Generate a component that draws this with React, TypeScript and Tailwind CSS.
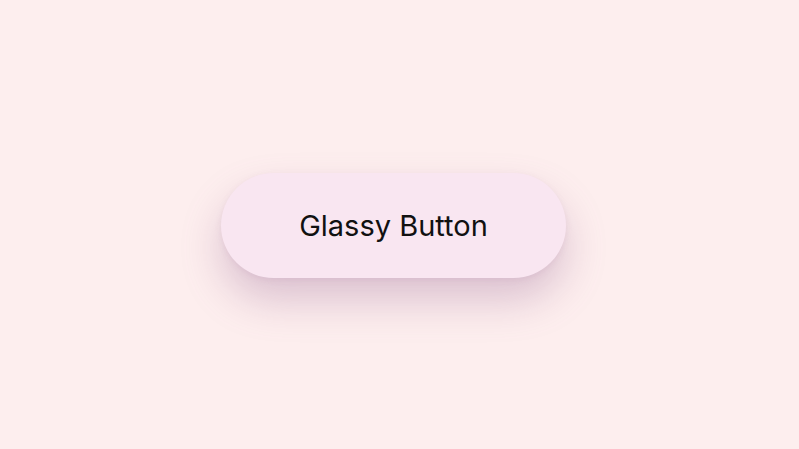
export default function App() {
  return (
    <div className="w-[799px] h-[449px] bg-[#fdeeee] flex items-center justify-center">
      <button
        className="w-[345px] h-[105px] mt-[2px] mr-[12px] rounded-full bg-[#f9e6f1] text-[#111] text-[29px] shadow-[0_22px_40px_rgba(150,100,145,0.32),0_2px_6px_rgba(150,100,145,0.1)] flex items-center justify-center"
        style={{ fontFamily: 'Inter, "Liberation Sans", sans-serif' }}
      >
        Glassy Button
      </button>
    </div>
  );
}
